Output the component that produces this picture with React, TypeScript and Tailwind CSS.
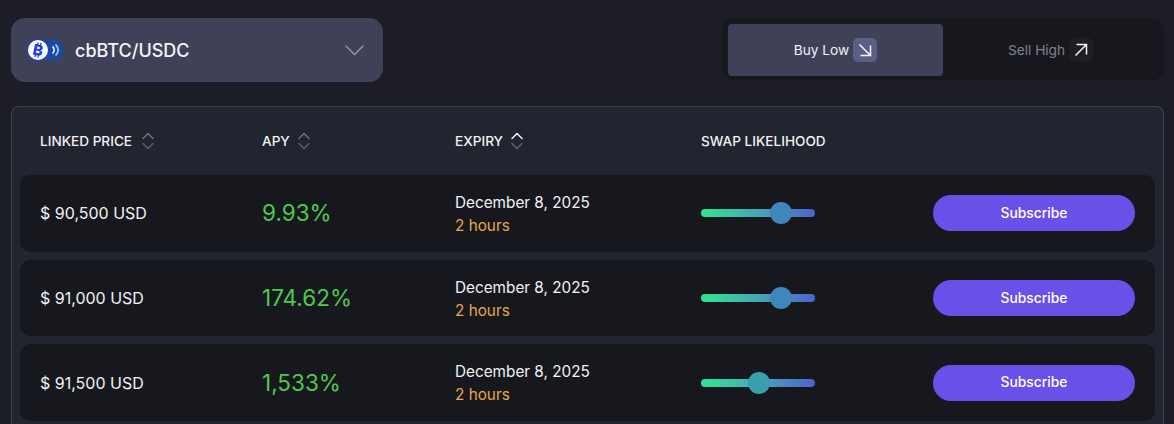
const rows = [
  { price: "$ 90,500 USD", apy: "9.93%", thumb: 70, knob: "bg-[#3f86bb]" },
  { price: "$ 91,000 USD", apy: "174.62%", thumb: 70, knob: "bg-[#3f86bb]" },
  { price: "$ 91,500 USD", apy: "1,533%", thumb: 51, knob: "bg-[#379fae]" },
];

function SortIcon({ active = false }: { active?: boolean }) {
  return (
    <svg width="14" height="18" viewBox="0 0 14 18" fill="none" strokeWidth="1.5" strokeLinecap="round" strokeLinejoin="round">
      <path d="M2 6.5 7 1.5 12 6.5" stroke={active ? "#f4f4f6" : "#6b6d86"} />
      <path d="M2 11.5 7 16.5 12 11.5" stroke="#5b5d78" />
    </svg>
  );
}

function CoinPair() {
  return (
    <svg width="37" height="24" viewBox="0 0 37 24" className="shrink-0">
      <circle cx="25.5" cy="12" r="11" fill="#1b4a9c" />
      <path d="M28.5 6.5a7 7 0 0 1 0 11" fill="none" stroke="#a9c9f2" strokeWidth="1.7" />
      <path d="M25.5 8.5a4.5 4.5 0 0 1 0 7" fill="none" stroke="#dbe8fa" strokeWidth="1.7" />
      <circle cx="11" cy="12" r="11" fill="#1c3ddc" />
      <circle cx="11" cy="12" r="10" fill="#ffffff" />
      <g transform="rotate(12 11 12)">
        <text x="11" y="17.5" textAnchor="middle" fontSize="15" fontWeight="800" fontFamily="Inter, sans-serif" fill="#1c3ddc">
          B
        </text>
        <path d="M9.5 4.5v2.5M12.5 4.5v2.5M9.5 17v2.5M12.5 17v2.5" stroke="#1c3ddc" strokeWidth="1.3" />
      </g>
    </svg>
  );
}

function Row({ price, apy, thumb, knob }: (typeof rows)[number]) {
  return (
    <div className="grid h-[76.7px] grid-cols-[222px_193px_246px_232px_1fr] items-center rounded-[10px] bg-[#17181d] pl-5 pr-5">
      <span className="text-[16px] text-[#f2f2f4]">{price}</span>
      <span className="text-[22.5px] text-[#4fc94b]">{apy}</span>
      <div className="flex flex-col pt-px leading-[23px]">
        <span className="text-[15.3px] text-[#f2f2f4]">December 8, 2025</span>
        <span className="text-[15.3px] text-[#e8a64c]">2 hours</span>
      </div>
      <div className="relative h-2 w-[114px] rounded-full bg-gradient-to-r from-[#2fe58c] to-[#5060cc]">
        <span
          className={`absolute top-1/2 h-[22px] w-[22px] -translate-x-1/2 -translate-y-1/2 rounded-full ${knob}`}
          style={{ left: `${thumb}%` }}
        />
      </div>
      <button className="h-9 w-[202px] justify-self-end rounded-full bg-[#6a50e8] text-[13.8px] font-medium text-white">
        Subscribe
      </button>
    </div>
  );
}

export default function App() {
  return (
    <div className="h-[424px] overflow-hidden bg-[#1c1d26] pl-[11px] pr-[10px] pt-[18px] font-['Inter',sans-serif]">
      <div className="flex items-start justify-between">
        <div className="flex h-16 w-[372px] items-center rounded-[14px] bg-[#3f4159] pl-4 pr-[19px]">
          <CoinPair />
          <span className="ml-[11px] text-[18px] font-medium text-[#f4f4f6]">cbBTC/USDC</span>
          <svg width="19" height="11" viewBox="0 0 19 11" fill="none" className="ml-auto">
            <path d="M1 1l8.5 8.5L18 1" stroke="#9a9dbd" strokeWidth="1.2" strokeLinecap="round" strokeLinejoin="round" />
          </svg>
        </div>

        <div className="flex h-[62px] w-[442px] rounded-[12px] bg-[#17181d] px-[6px] pt-[6px]">
          <button className="flex h-[52px] w-[215px] items-center justify-center gap-1 rounded-[4px] bg-[#3f4159] text-[13.7px] text-[#f0f0f4]">
            Buy Low
            <span className="flex h-6 w-6 items-center justify-center rounded-[5px] bg-[#5c5f85]">
              <svg width="14" height="14" viewBox="0 0 14 14" fill="none" stroke="#f4f4f8" strokeWidth="1.5">
                <path d="M1.5 1.5 12 12M12.5 2.5v10h-10" />
              </svg>
            </span>
          </button>
          <button className="flex h-[52px] w-[215px] items-center justify-center gap-1 text-[13.7px] text-[#7f8093]">
            Sell High
            <span className="flex h-6 w-6 items-center justify-center rounded-[5px] bg-[#1e1f25]">
              <svg width="14" height="14" viewBox="0 0 14 14" fill="none" stroke="#f4f4f8" strokeWidth="1.5">
                <path d="M1.5 12.5 12 2M2.5 1.5h10v10" />
              </svg>
            </span>
          </button>
        </div>
      </div>

      <div className="mt-6 rounded-t-[8px] border border-b-0 border-[#3e4050] bg-[#22242f] px-2 pb-2">
        <div className="grid h-[68px] grid-cols-[222px_193px_246px_1fr] items-center pl-5 pt-px text-[13.6px] font-medium text-[#f2f2f4]">
          <div className="flex items-center gap-[9px]">
            LINKED PRICE <SortIcon />
          </div>
          <div className="flex items-center gap-[7px]">
            APY <SortIcon />
          </div>
          <div className="flex items-center gap-[7px]">
            EXPIRY <SortIcon active />
          </div>
          <div>SWAP LIKELIHOOD</div>
        </div>
        <div className="flex flex-col gap-2">
          {rows.map((row) => (
            <Row key={row.price} {...row} />
          ))}
        </div>
      </div>
    </div>
  );
}
